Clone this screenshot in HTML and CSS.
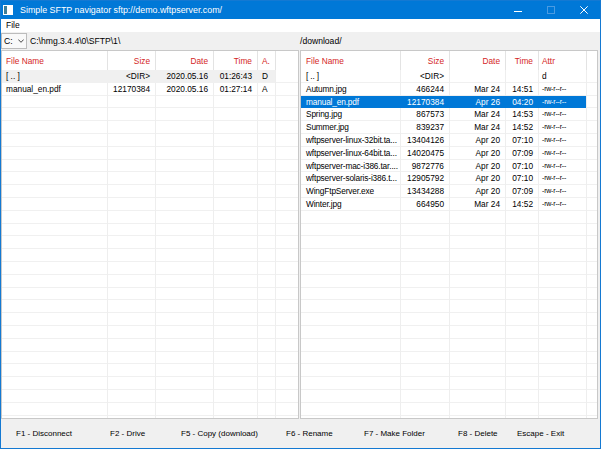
FILE: index.html
```html
<!DOCTYPE html>
<html lang="en">
<head>
<meta charset="utf-8">
<title>Simple SFTP navigator</title>
<link rel="stylesheet" href="styles.css">
</head>
<body>
<div class="window">
  <header class="titlebar">
    <svg class="app-icon" width="10" height="10" viewBox="0 0 10 10"><rect x="0" y="0" width="10" height="10" fill="#fff"/><rect x="1" y="1" width="3" height="8" fill="#3f7f98"/></svg>
    <span class="title">Simple SFTP navigator sftp://demo.wftpserver.com/</span>
    <div class="controls">
      <span class="ctl"><svg width="8" height="8" viewBox="0 0 8 8"><line x1="0" y1="5.5" x2="8" y2="5.5" stroke="#fff" stroke-width="1"/></svg></span>
      <span class="ctl"><svg width="8" height="8" viewBox="0 0 8 8"><rect x="0.5" y="0.5" width="7" height="7" fill="none" stroke="#4a9be2" stroke-width="1"/></svg></span>
      <span class="ctl"><svg width="8" height="8" viewBox="0 0 8 8"><path d="M0.3 0.3 L7.7 7.7 M7.7 0.3 L0.3 7.7" stroke="#fff" stroke-width="1"/></svg></span>
    </div>
  </header>
  <nav class="menubar"><span class="menu-item">File</span></nav>
  <div class="pathbar">
    <div class="path-left">
      <div class="combo"><span>C:</span><svg class="chev" width="6" height="4" viewBox="0 0 6 4"><path d="M0.3 0.5 L3 3.3 L5.7 0.5" fill="none" stroke="#333" stroke-width="0.9"/></svg></div>
      <span class="path">C:\hmg.3.4.4\0\SFTP\1\</span>
    </div>
    <div class="path-right"><span class="path">/download/</span></div>
  </div>
  <main class="panels">
    <section class="list list-left">
      <table>
        <colgroup><col style="width:105px"><col style="width:48px"><col style="width:58px"><col style="width:44px"><col style="width:18px"><col></colgroup>
        <thead>
          <tr><th class="l name">File Name</th><th>Size</th><th>Date</th><th>Time</th><th class="l">A.</th><th class="fill"></th></tr>
        </thead>
        <tbody>
          <tr class="dim"><td class="l name">[ .. ]</td><td>&lt;DIR&gt;</td><td>2020.05.16</td><td>01:26:43</td><td class="l">D</td><td class="fill"></td></tr>
          <tr><td class="l name">manual_en.pdf</td><td>12170384</td><td>2020.05.16</td><td>01:27:14</td><td class="l">A</td><td class="fill"></td></tr>
        </tbody>
      </table>
    </section>
    <section class="list list-right">
      <table>
        <colgroup><col style="width:99px"><col style="width:49px"><col style="width:56px"><col style="width:33px"><col style="width:48px"><col></colgroup>
        <thead>
          <tr><th class="l">File Name</th><th>Size</th><th>Date</th><th>Time</th><th class="l attr">Attr</th><th class="fill"></th></tr>
        </thead>
        <tbody>
          <tr><td class="l fname">[ .. ]</td><td>&lt;DIR&gt;</td><td></td><td></td><td class="l attr">d</td><td class="fill"></td></tr>
          <tr><td class="l fname">Autumn.jpg</td><td>466244</td><td>Mar 24</td><td>14:51</td><td class="l attr perm">-rw-r--r--</td><td class="fill"></td></tr>
          <tr class="sel"><td class="l fname">manual_en.pdf</td><td>12170384</td><td>Apr 26</td><td>04:20</td><td class="l attr perm">-rw-r--r--</td><td class="fill"></td></tr>
          <tr><td class="l fname">Spring.jpg</td><td>867573</td><td>Mar 24</td><td>14:53</td><td class="l attr perm">-rw-r--r--</td><td class="fill"></td></tr>
          <tr><td class="l fname">Summer.jpg</td><td>839237</td><td>Mar 24</td><td>14:52</td><td class="l attr perm">-rw-r--r--</td><td class="fill"></td></tr>
          <tr><td class="l fname">wftpserver-linux-32bit.ta...</td><td>13404126</td><td>Apr 20</td><td>07:10</td><td class="l attr perm">-rw-r--r--</td><td class="fill"></td></tr>
          <tr><td class="l fname">wftpserver-linux-64bit.ta...</td><td>14020475</td><td>Apr 20</td><td>07:09</td><td class="l attr perm">-rw-r--r--</td><td class="fill"></td></tr>
          <tr><td class="l fname">wftpserver-mac-i386.tar....</td><td>9872776</td><td>Apr 20</td><td>07:10</td><td class="l attr perm">-rw-r--r--</td><td class="fill"></td></tr>
          <tr><td class="l fname">wftpserver-solaris-i386.t...</td><td>12905792</td><td>Apr 20</td><td>07:10</td><td class="l attr perm">-rw-r--r--</td><td class="fill"></td></tr>
          <tr><td class="l fname">WingFtpServer.exe</td><td>13434288</td><td>Apr 20</td><td>07:09</td><td class="l attr perm">-rw-r--r--</td><td class="fill"></td></tr>
          <tr><td class="l fname">Winter.jpg</td><td>664950</td><td>Mar 24</td><td>14:52</td><td class="l attr perm">-rw-r--r--</td><td class="fill"></td></tr>
        </tbody>
      </table>
    </section>
  </main>
  <footer class="statusbar">
    <span class="key k1">F1 - Disconnect</span>
    <span class="key k2">F2 - Drive</span>
    <span class="key k5">F5 - Copy (download)</span>
    <span class="key k6">F6 - Rename</span>
    <span class="key k7">F7 - Make Folder</span>
    <span class="key k8">F8 - Delete</span>
    <span class="key">Escape - Exit</span>
  </footer>
</div>
</body>
</html>
```
FILE: styles.css
```css
* { box-sizing: border-box; }
html, body { margin: 0; padding: 0; }
body {
  width: 601px;
  height: 449px;
  overflow: hidden;
  background: #f0f0f0;
  font-family: "Liberation Sans", Arial, sans-serif;
  color: #000;
}
.window {
  width: 601px;
  height: 449px;
  border: 1px solid #1479d2;
  display: flex;
  flex-direction: column;
  background: #f0f0f0;
}

/* title bar */
.titlebar {
  flex: none;
  height: 18px;
  background: #0078d7;
  color: #fff;
  display: flex;
  align-items: center;
  padding-left: 2px;
  font-size: 8.9px;
}
.app-icon { flex: none; }
.title { margin-left: 7px; white-space: nowrap; }
.controls { margin-left: auto; display: flex; height: 100%; }
.ctl {
  width: 33px;
  display: flex;
  align-items: center;
  justify-content: center;
}
.ctl svg { display: block; }

/* menu */
.menubar {
  flex: none;
  height: 13px;
  background: #fff;
  font-size: 8.5px;
  line-height: 13px;
  padding-left: 5px;
}

/* path bar */
.pathbar {
  flex: none;
  height: 18px;
  display: flex;
  font-size: 8.6px;
}
.path-left { width: 299px; display: flex; align-items: center; }
.path-right { flex: 1; display: flex; align-items: center; }
.combo {
  width: 26px;
  height: 16px;
  border: 1px solid #bcbcbc;
  background: #f9f9f9;
  display: flex;
  align-items: center;
  padding: 0 2px 0 2px;
}
.chev { margin-left: auto; display: block; }
.path-left .path { margin-left: 3px; white-space: nowrap; }

/* panels */
.panels {
  flex: none;
  height: 369px;
  display: flex;
  gap: 1px;
}
.list {
  width: 298px;
  height: 100%;
  border: 1px solid #c8c8c8;
  overflow: hidden;
  background-color: #fff;
  background-repeat: no-repeat, no-repeat, no-repeat, no-repeat, no-repeat, repeat;
}
.list-left {
  background-image:
    linear-gradient(#eeeeee, #eeeeee),
    linear-gradient(#eeeeee, #eeeeee),
    linear-gradient(#eeeeee, #eeeeee),
    linear-gradient(#eeeeee, #eeeeee),
    linear-gradient(#eeeeee, #eeeeee),
    repeating-linear-gradient(to bottom, transparent 0, transparent 11.8px, #f0f0f0 11.8px, #f0f0f0 12.8px);
  background-size: 1px 100%, 1px 100%, 1px 100%, 1px 100%, 1px 100%, 100% 100%;
  background-position: 105px 0, 153px 0, 211px 0, 255px 0, 273px 0, 0 19px;
}
.list-right {
  background-image:
    linear-gradient(#eeeeee, #eeeeee),
    linear-gradient(#eeeeee, #eeeeee),
    linear-gradient(#eeeeee, #eeeeee),
    linear-gradient(#eeeeee, #eeeeee),
    linear-gradient(#eeeeee, #eeeeee),
    repeating-linear-gradient(to bottom, transparent 0, transparent 11.8px, #f0f0f0 11.8px, #f0f0f0 12.8px);
  background-size: 1px 100%, 1px 100%, 1px 100%, 1px 100%, 1px 100%, 100% 100%;
  background-position: 99px 0, 148px 0, 204px 0, 237px 0, 285px 0, 0 19px;
}
table {
  width: 100%;
  border-collapse: collapse;
  table-layout: fixed;
  font-size: 8.3px;
}
th {
  height: 19px;
  padding: 0 5px;
  font-weight: normal;
  color: #d42626;
  text-align: right;
  white-space: nowrap;
  overflow: hidden;
  background: #fff;
}
th + th {
  background: linear-gradient(#e3e3e3, #e3e3e3) 0 0 / 1px 100% no-repeat, #fff;
}
td {
  height: 12.8px;
  line-height: 12.8px;
  padding: 0 5px;
  text-align: right;
  white-space: nowrap;
  overflow: hidden;
}
.l { text-align: left; }
.list-left .name { padding-left: 4px; }
.fname { padding-right: 0; letter-spacing: -0.15px; }
.attr { padding-left: 4px; }
.perm { font-size: 7px; letter-spacing: -0.2px; }
tr.dim td { background: #f0f0f0; }
tr.sel td { background: #0078d7; color: #fff; }
tr.dim td.fill, tr.sel td.fill { background: transparent; }

/* status bar */
.statusbar {
  flex: 1;
  display: flex;
  align-items: center;
  padding-left: 15px;
  font-size: 8px;
  white-space: nowrap;
}
.key { flex: none; }
.k1 { width: 94px; }
.k2 { width: 71px; }
.k5 { width: 105px; }
.k6 { width: 78px; }
.k7 { width: 94px; }
.k8 { width: 59px; }
```
